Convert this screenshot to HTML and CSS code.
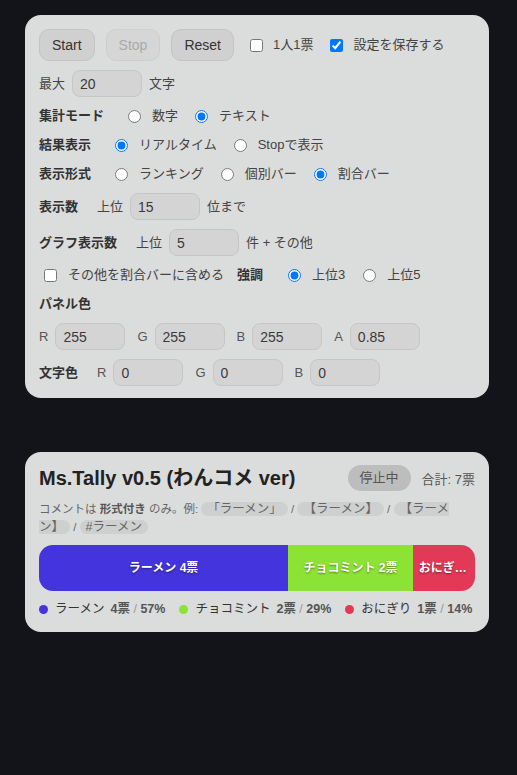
FILE: index.html
```html
<!DOCTYPE html>
<html lang="ja">
<head>
<meta charset="utf-8">
<title>Ms.Tally</title>
<link rel="stylesheet" href="styles.css">
</head>
<body>
<div class="page">
  <section class="panel settings">
    <div class="row r-buttons">
      <button class="btn">Start</button>
      <button class="btn" disabled>Stop</button>
      <button class="btn">Reset</button>
      <label class="chk chk-a"><input type="checkbox">1人1票</label>
      <label class="chk chk-b"><input type="checkbox" checked>設定を保存する</label>
    </div>
    <div class="row">
      <span>最大</span>
      <input class="inp" type="text" value="20">
      <span>文字</span>
    </div>
    <div class="row radios">
      <span class="lbl">集計モード</span>
      <label class="opt"><input type="radio" name="mode">数字</label>
      <label class="opt"><input type="radio" name="mode" checked>テキスト</label>
    </div>
    <div class="row radios">
      <span class="lbl">結果表示</span>
      <label class="opt"><input type="radio" name="res" checked>リアルタイム</label>
      <label class="opt"><input type="radio" name="res">Stopで表示</label>
    </div>
    <div class="row radios">
      <span class="lbl">表示形式</span>
      <label class="opt"><input type="radio" name="fmt">ランキング</label>
      <label class="opt"><input type="radio" name="fmt">個別バー</label>
      <label class="opt"><input type="radio" name="fmt" checked>割合バー</label>
    </div>
    <div class="row">
      <span class="lbl">表示数</span>
      <span>上位</span>
      <input class="inp" type="text" value="15">
      <span>位まで</span>
    </div>
    <div class="row">
      <span class="lbl">グラフ表示数</span>
      <span>上位</span>
      <input class="inp" type="text" value="5">
      <span>件 + その他</span>
    </div>
    <div class="row">
      <label class="chk chk-other"><input type="checkbox">その他を割合バーに含める</label>
      <span class="lbl lbl-em">強調</span>
      <label class="opt"><input type="radio" name="em" checked>上位3</label>
      <label class="opt opt-next"><input type="radio" name="em">上位5</label>
    </div>
    <div class="row">
      <span class="lbl">パネル色</span>
    </div>
    <div class="row">
      <span class="cl">R</span><input class="inp" type="text" value="255">
      <span class="cl cl-n">G</span><input class="inp" type="text" value="255">
      <span class="cl cl-n">B</span><input class="inp" type="text" value="255">
      <span class="cl cl-n">A</span><input class="inp" type="text" value="0.85">
    </div>
    <div class="row">
      <span class="lbl">文字色</span>
      <span class="cl">R</span><input class="inp" type="text" value="0">
      <span class="cl cl-n">G</span><input class="inp" type="text" value="0">
      <span class="cl cl-n">B</span><input class="inp" type="text" value="0">
    </div>
  </section>

  <section class="panel tally">
    <div class="thead">
      <h1 class="title">Ms.Tally v0.5 (わんコメ ver)</h1>
      <div class="tright">
        <span class="pill">停止中</span>
        <span class="total">合計: 7票</span>
      </div>
    </div>
    <p class="hint">コメントは <strong>形式付き</strong> のみ。例: <code>「ラーメン」</code> / <code>【ラーメン】</code> / <code>【ラーメン】</code> / <code>#ラーメン</code></p>
    <div class="bar">
      <div class="seg seg-blue" style="width:57.14%">ラーメン 4票</div>
      <div class="seg seg-green" style="width:28.57%">チョコミント 2票</div>
      <div class="seg seg-red" style="width:14.29%">おにぎり 1票</div>
    </div>
    <div class="legend">
      <div class="item"><span class="dot dot-blue"></span><span class="name">ラーメン</span><span class="stats"><b>4票</b> / <b>57%</b></span></div>
      <div class="item"><span class="dot dot-green"></span><span class="name">チョコミント</span><span class="stats"><b>2票</b> / <b>29%</b></span></div>
      <div class="item"><span class="dot dot-red"></span><span class="name">おにぎり</span><span class="stats"><b>1票</b> / <b>14%</b></span></div>
    </div>
  </section>
</div>
</body>
</html>
```

FILE: styles.css
```css
html, body {
  margin: 0;
  padding: 0;
  background: #131419;
}
body {
  font-family: "Liberation Sans", "Noto Sans CJK JP", sans-serif;
  font-size: 13px;
  color: #444;
  height: 775px;
}
.page {
  padding: 15px 28px 0 25px;
}
.panel {
  width: 464px;
  box-sizing: border-box;
  background: rgba(255, 255, 255, 0.85);
  border-radius: 16px;
}
.settings {
  padding: 14px 14px 12px 14px;
  display: flex;
  flex-direction: column;
  gap: 9px;
}
.row {
  display: flex;
  align-items: center;
  gap: 7px;
  min-height: 20px;
  line-height: 20px;
  white-space: nowrap;
}
.r-buttons {
  gap: 11px;
}
.btn {
  height: 32px;
  padding: 0 12px;
  border: 1px solid #c4c4c4;
  border-radius: 10px;
  background: #d0d0d0;
  color: #333;
  font-family: "Liberation Sans", "Noto Sans CJK JP", sans-serif;
  font-size: 14px;
}
.btn:disabled {
  background: #d6d6d6;
  border-color: #cecece;
  color: #a9a9a9;
}
.chk, .opt {
  display: flex;
  align-items: center;
}
.chk input {
  margin: 0 10px 0 0;
  width: 13px;
  height: 13px;
}
.chk-a { margin-left: 5px; }
.chk-b { margin-left: 6px; }
.chk-other { margin-left: 5px; }
.chk-other input { margin-right: 11px; }
.opt input {
  margin: 0 11px 0 0;
  width: 13px;
  height: 13px;
}
.lbl {
  font-weight: bold;
  color: #333;
  margin-right: 12px;
}
.radios .lbl {
  margin-right: 17px;
}
.radios .opt + .opt {
  margin-left: 10px;
}
.lbl-em {
  margin-left: 6px;
  margin-right: 18px;
}
.opt-next {
  margin-left: 11px;
}
.inp {
  width: 70px;
  height: 27px;
  box-sizing: border-box;
  border: 1px solid #c6c6c6;
  border-radius: 8px;
  background: #d4d4d4;
  padding: 0 7px;
  margin: 0;
  color: #3a3a3a;
  font-family: "Liberation Sans", "Noto Sans CJK JP", sans-serif;
  font-size: 14px;
}
.cl {
  color: #555;
}
.cl-n {
  margin-left: 5px;
}

.tally {
  margin-top: 54px;
  padding: 13px 14px 14px 14px;
}
.thead {
  display: flex;
  align-items: center;
  justify-content: space-between;
  height: 26px;
}
.title {
  margin: 0;
  font-size: 20px;
  font-weight: bold;
  color: #222;
  line-height: 26px;
  white-space: nowrap;
}
.tright {
  display: flex;
  align-items: center;
  gap: 11px;
}
.pill {
  height: 26px;
  line-height: 26px;
  padding: 0 12px;
  border-radius: 13px;
  background: #bdbdbd;
  color: #555;
  font-size: 13px;
}
.total {
  color: #555;
  font-size: 13px;
}
.hint {
  margin: 9px 0 0 0;
  font-size: 11.5px;
  line-height: 18px;
  color: #666;
}
.hint strong {
  color: #555;
}
.hint code {
  font-family: "Liberation Sans", "Noto Sans CJK JP", sans-serif;
  font-size: 12.5px;
  line-height: 16px;
  background: rgba(0, 0, 0, 0.06);
  border-radius: 8px;
  padding: 0 6px;
  color: #666;
}
.bar {
  margin-top: 9px;
  display: flex;
  height: 46px;
  border-radius: 14px;
  overflow: hidden;
}
.seg {
  box-sizing: border-box;
  padding: 0 6px;
  line-height: 46px;
  text-align: center;
  color: #fff;
  font-weight: bold;
  font-size: 12px;
  white-space: nowrap;
  overflow: hidden;
  text-overflow: ellipsis;
  text-shadow: 0 1px 2px rgba(0, 0, 0, 0.45);
}
.seg-blue, .dot-blue { background: #4434dd; }
.seg-green, .dot-green { background: #8de236; }
.seg-red, .dot-red { background: #e13956; }
.legend {
  margin-top: 9px;
  display: flex;
  gap: 14px;
  font-size: 12.5px;
  line-height: 18px;
  white-space: nowrap;
}
.item {
  display: flex;
  align-items: center;
}
.dot {
  width: 9px;
  height: 9px;
  border-radius: 50%;
  margin-right: 7px;
}
.name {
  color: #333;
}
.stats {
  margin-left: 6px;
  color: #999;
}
.stats b {
  color: #555;
}
```
